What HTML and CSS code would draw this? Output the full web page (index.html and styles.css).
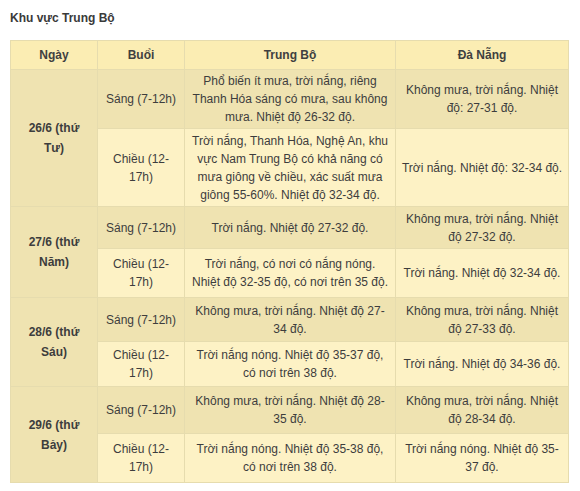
FILE: index.html
```html
<!DOCTYPE html>
<html lang="vi">
<head>
<meta charset="utf-8">
<link rel="stylesheet" href="styles.css">
</head>
<body>
<div class="page">
  <h3 class="title">Khu vực Trung Bộ</h3>
  <table class="weather">
    <colgroup>
      <col class="c-day"><col class="c-time"><col class="c-tb"><col class="c-dn">
    </colgroup>
    <thead>
      <tr class="h-head"><th>Ngày</th><th>Buổi</th><th>Trung Bộ</th><th>Đà Nẵng</th></tr>
    </thead>
    <tbody>
      <tr class="am h1"><td class="day" rowspan="2">26/6 (thứ Tư)</td><td>Sáng (7-12h)</td><td>Phổ biến ít mưa, trời nắng, riêng Thanh Hóa sáng có mưa, sau không mưa. Nhiệt độ 26-32 độ.</td><td>Không mưa, trời nắng. Nhiệt độ: 27-31 độ.</td></tr>
      <tr class="pm h2"><td class="pm-time">Chiều (12-17h)</td><td>Trời nắng, Thanh Hóa, Nghệ An, khu vực Nam Trung Bộ có khả năng có mưa giông về chiều, xác suất mưa giông 55-60%. Nhiệt độ 32-34 độ.</td><td>Trời nắng. Nhiệt độ: 32-34 độ.</td></tr>
      <tr class="am h3"><td class="day" rowspan="2">27/6 (thứ Năm)</td><td>Sáng (7-12h)</td><td>Trời nắng. Nhiệt độ 27-32 độ.</td><td>Không mưa, trời nắng. Nhiệt độ 27-32 độ.</td></tr>
      <tr class="pm h4"><td class="pm-time">Chiều (12-17h)</td><td>Trời nắng, có nơi có nắng nóng. Nhiệt độ 32-35 độ, có nơi trên 35 độ.</td><td>Trời nắng. Nhiệt độ 32-34 độ.</td></tr>
      <tr class="am h5"><td class="day" rowspan="2">28/6 (thứ Sáu)</td><td>Sáng (7-12h)</td><td>Không mưa, trời nắng. Nhiệt độ 27-34 độ.</td><td>Không mưa, trời nắng. Nhiệt độ 27-33 độ.</td></tr>
      <tr class="pm h6"><td class="pm-time">Chiều (12-17h)</td><td>Trời nắng nóng. Nhiệt độ 35-37 độ, có nơi trên 38 độ.</td><td>Trời nắng. Nhiệt độ 34-36 độ.</td></tr>
      <tr class="am h7"><td class="day" rowspan="2">29/6 (thứ Bảy)</td><td>Sáng (7-12h)</td><td>Không mưa, trời nắng. Nhiệt độ 28-35 độ.</td><td>Không mưa, trời nắng. Nhiệt độ 28-34 độ.</td></tr>
      <tr class="pm h8"><td class="pm-time">Chiều (12-17h)</td><td>Trời nắng nóng. Nhiệt độ 35-38 độ, có nơi trên 38 độ.</td><td>Trời nắng nóng. Nhiệt độ 35-37 độ.</td></tr>
    </tbody>
  </table>
</div>
</body>
</html>
```

FILE: styles.css
```css
html, body {
  margin: 0;
  padding: 0;
  background: #ffffff;
}
body {
  font-family: "Liberation Sans", Arial, sans-serif;
  color: #3d3d3d;
}
.page {
  padding: 10px 0 0 10px;
}
.title {
  margin: 0;
  font-size: 12px;
  font-weight: bold;
  line-height: 16px;
  color: #3a3a3a;
  height: 30px;
}
.weather {
  border-collapse: collapse;
  width: 558px;
  table-layout: fixed;
  font-size: 12px;
  border: 1px solid #ddd6bd;
}
.c-day { width: 87px; }
.c-time { width: 87px; }
.c-tb { width: 211px; }
.c-dn { width: 173px; }
.weather th,
.weather td {
  border: 1px solid #e6dcae;
  padding: 2px 5px;
  text-align: center;
  vertical-align: middle;
  line-height: 18px;
}
.weather th {
  background: #fbedb3;
  font-weight: bold;
  color: #404040;
}
.h-head { height: 29px; }
.am td { background: #efe3b1; }
.pm td { background: #fdf2c5; }
.weather td.day {
  background: #efe3b1;
  font-weight: bold;
  padding: 2px 12px;
  line-height: 20px;
}
.pm-time { line-height: 21px; }
.h1 { height: 58px; }
.h2 { height: 78px; }
.h3 { height: 42px; }
.h4 { height: 49px; }
.h5 { height: 44px; }
.h6 { height: 45px; }
.h7 { height: 47px; }
.h8 { height: 49px; }
```
